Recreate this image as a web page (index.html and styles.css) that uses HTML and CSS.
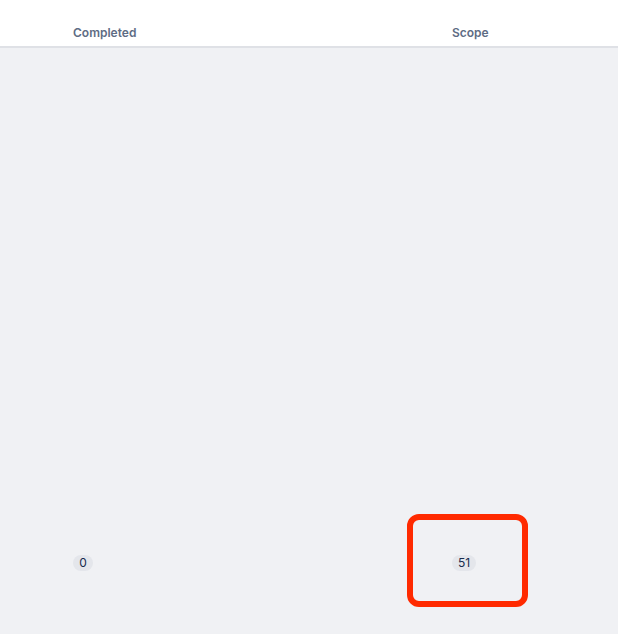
FILE: index.html
```html
<!DOCTYPE html>
<html>
<head>
<meta charset="utf-8">
<link rel="stylesheet" href="styles.css">
</head>
<body>
<div class="table">
  <div class="head">
    <div class="th">Completed</div>
    <div class="th">Scope</div>
  </div>
  <div class="body">
    <div class="row">
      <div class="cell"><span class="badge">0</span></div>
      <div class="cell"><span class="badge">51</span></div>
    </div>
  </div>
  <div class="highlight"></div>
</div>
</body>
</html>
```
FILE: styles.css
```css
html, body {
  margin: 0;
  padding: 0;
}
body {
  width: 618px;
  height: 634px;
  overflow: hidden;
  background: #f0f1f4;
  font-family: Inter, "Liberation Sans", sans-serif;
}
.table {
  position: relative;
  height: 634px;
  display: flex;
  flex-direction: column;
}
.head {
  display: grid;
  grid-template-columns: 379px 1fr;
  padding-left: 73px;
  height: 46px;
  background: #ffffff;
  border-bottom: 2px solid #dfe1e6;
  box-sizing: content-box;
}
.th {
  font-size: 12px;
  font-weight: 600;
  color: #5e6c84;
  line-height: 16px;
  padding-top: 25px;
}
.body {
  flex: 1;
  display: flex;
  flex-direction: column;
  justify-content: flex-end;
  padding-bottom: 63px;
}
.row {
  display: grid;
  grid-template-columns: 379px 1fr;
  padding-left: 73px;
}
.badge {
  display: inline-block;
  min-width: 20px;
  height: 16px;
  padding: 0 6px;
  box-sizing: border-box;
  border-radius: 8px;
  background: #e4e6eb;
  color: #172b4d;
  font-size: 12px;
  line-height: 16px;
  text-align: center;
}
.highlight {
  position: absolute;
  left: 407px;
  top: 514px;
  width: 121px;
  height: 93px;
  box-sizing: border-box;
  border: 6px solid #ff2a00;
  border-radius: 12px;
}
```
